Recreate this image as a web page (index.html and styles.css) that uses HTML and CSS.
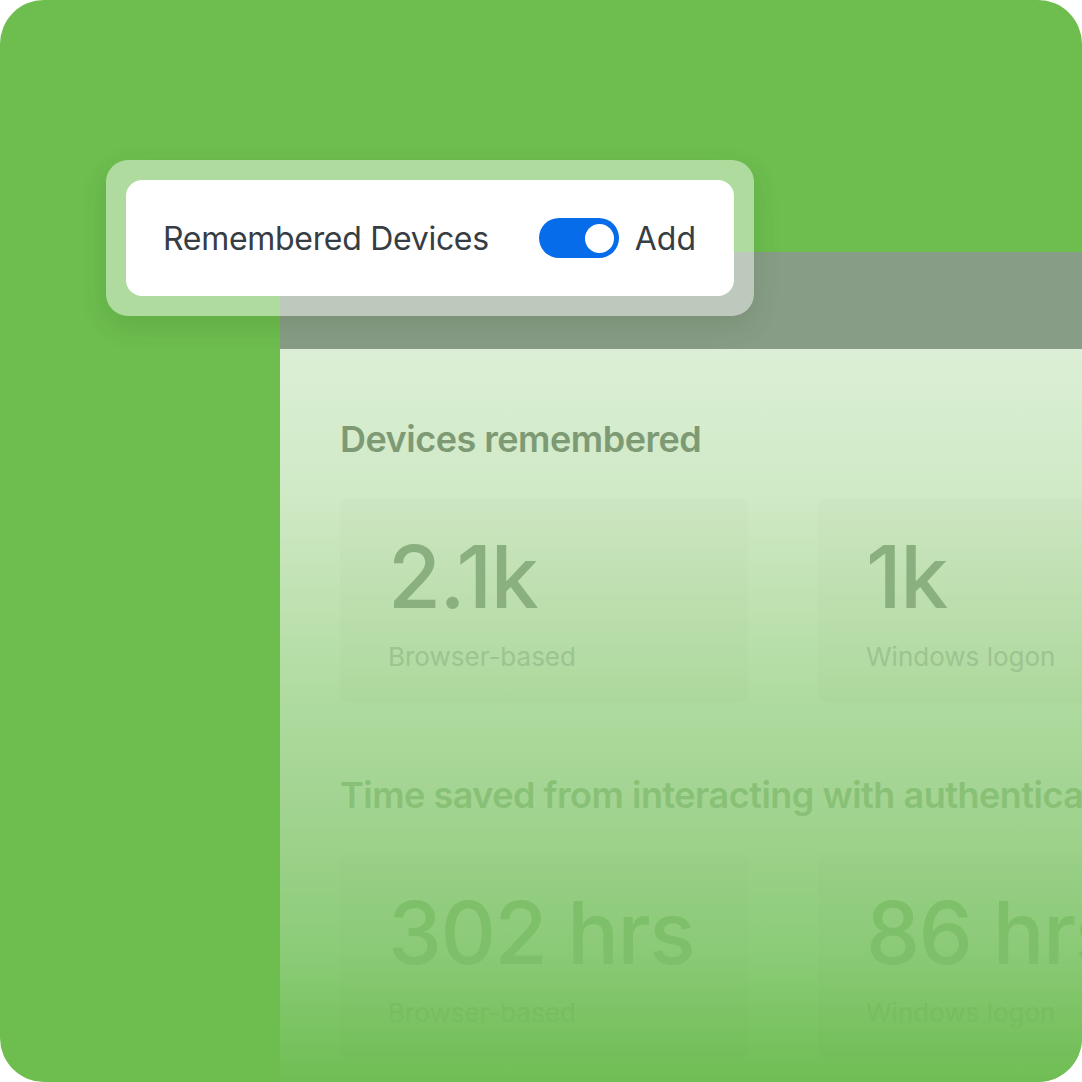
FILE: index.html
```html
<!DOCTYPE html>
<html lang="en">
<head>
<meta charset="utf-8">
<title>Remembered Devices</title>
<link rel="stylesheet" href="styles.css">
</head>
<body>
<div class="frame">
  <div class="panel">
    <div class="panel-header"></div>
    <div class="panel-body">
      <section class="group group-top">
        <h2 class="group-title">Devices remembered</h2>
        <div class="stats">
          <div class="stat">
            <div class="stat-value">2.1k</div>
            <div class="stat-label">Browser-based</div>
          </div>
          <div class="stat">
            <div class="stat-value">1k</div>
            <div class="stat-label">Windows logon</div>
          </div>
        </div>
      </section>
      <section class="group group-bottom">
        <h2 class="group-title">Time saved from interacting with authentication prompts</h2>
        <div class="stats">
          <div class="stat">
            <div class="stat-value">302 hrs</div>
            <div class="stat-label">Browser-based</div>
          </div>
          <div class="stat">
            <div class="stat-value">86 hrs</div>
            <div class="stat-label">Windows logon</div>
          </div>
        </div>
      </section>
    </div>
  </div>
  <div class="popover">
    <div class="popover-inner">
      <span class="popover-title">Remembered Devices</span>
      <span class="toggle"><span class="knob"></span></span>
      <span class="popover-action">Add</span>
    </div>
  </div>
</div>
</body>
</html>
```
FILE: styles.css
```css
* { box-sizing: border-box; }
html, body { margin: 0; padding: 0; background: #ffffff; }
body { font-family: Inter, "Noto Sans", sans-serif; }

.frame {
  position: relative;
  width: 1082px;
  height: 1082px;
  border-radius: 44px;
  overflow: hidden;
  background: #6dbd4f;
  padding: 252px 0 0 280px;
  display: flex;
}

.panel {
  flex: 1;
  display: flex;
  flex-direction: column;
  min-width: 0;
}

.panel-header {
  height: 97px;
  flex: none;
  background: #889d86;
}

.panel-body {
  flex: 1;
  padding: 68px 0 0 60px;
  background: linear-gradient(180deg,
    #dcefd6 0px,
    #cfe9c5 150px,
    #afdb9f 350px,
    #a3d492 450px,
    #8ccc78 600px,
    #6fbe54 733px);
  overflow: hidden;
}

.group-title {
  margin: 0 0 37px;
  font-size: 36px;
  line-height: 44px;
  font-weight: 600;
  white-space: nowrap;
  letter-spacing: -0.5px;
}

.stats {
  display: grid;
  grid-template-columns: 408px 408px;
  column-gap: 70px;
}

.stat {
  border-radius: 10px;
  padding: 36px 0 30px 48px;
  background: rgba(80, 120, 70, 0.018);
}

.group-bottom .stat { background: rgba(80, 120, 70, 0.01); }

.stat-value {
  font-size: 86px;
  line-height: 86px;
  font-weight: 500;
  letter-spacing: -1.5px;
  white-space: nowrap;
}

.stat-label {
  margin-top: 21px;
  font-size: 26px;
  line-height: 32px;
  white-space: nowrap;
}

.group-bottom { margin-top: 70px; }

.group-top .group-title { color: #7d9a74; }
.group-top .stat-value { color: #8bb07f; }
.group-top .stat-label { color: #9cc48f; }

.group-bottom .group-title { color: #88c176; }
.group-bottom .stat-value { color: #7ebf69; }
.group-bottom .stat-label { color: #78bd61; }

/* floating popover */
.popover {
  position: absolute;
  left: 106px;
  top: 160px;
  width: 648px;
  padding: 20px;
  border-radius: 22px;
  background: rgba(255, 255, 255, 0.45);
  box-shadow: 0 10px 28px rgba(20, 60, 10, 0.12);
}

.popover-inner {
  height: 116px;
  border-radius: 16px;
  background: #ffffff;
  display: flex;
  align-items: center;
  padding: 0 38px 0 37px;
}

.popover-title {
  font-size: 32px;
  color: #363d43;
  white-space: nowrap;
  letter-spacing: -0.3px;
}

.toggle {
  margin-left: auto;
  width: 80px;
  height: 40px;
  border-radius: 20px;
  background: #076ce9;
  display: flex;
  align-items: center;
  justify-content: flex-end;
  padding-right: 5px;
}

.knob {
  width: 29px;
  height: 29px;
  border-radius: 50%;
  background: #ffffff;
}

.popover-action {
  margin-left: 16px;
  font-size: 32px;
  color: #363d43;
}
```
